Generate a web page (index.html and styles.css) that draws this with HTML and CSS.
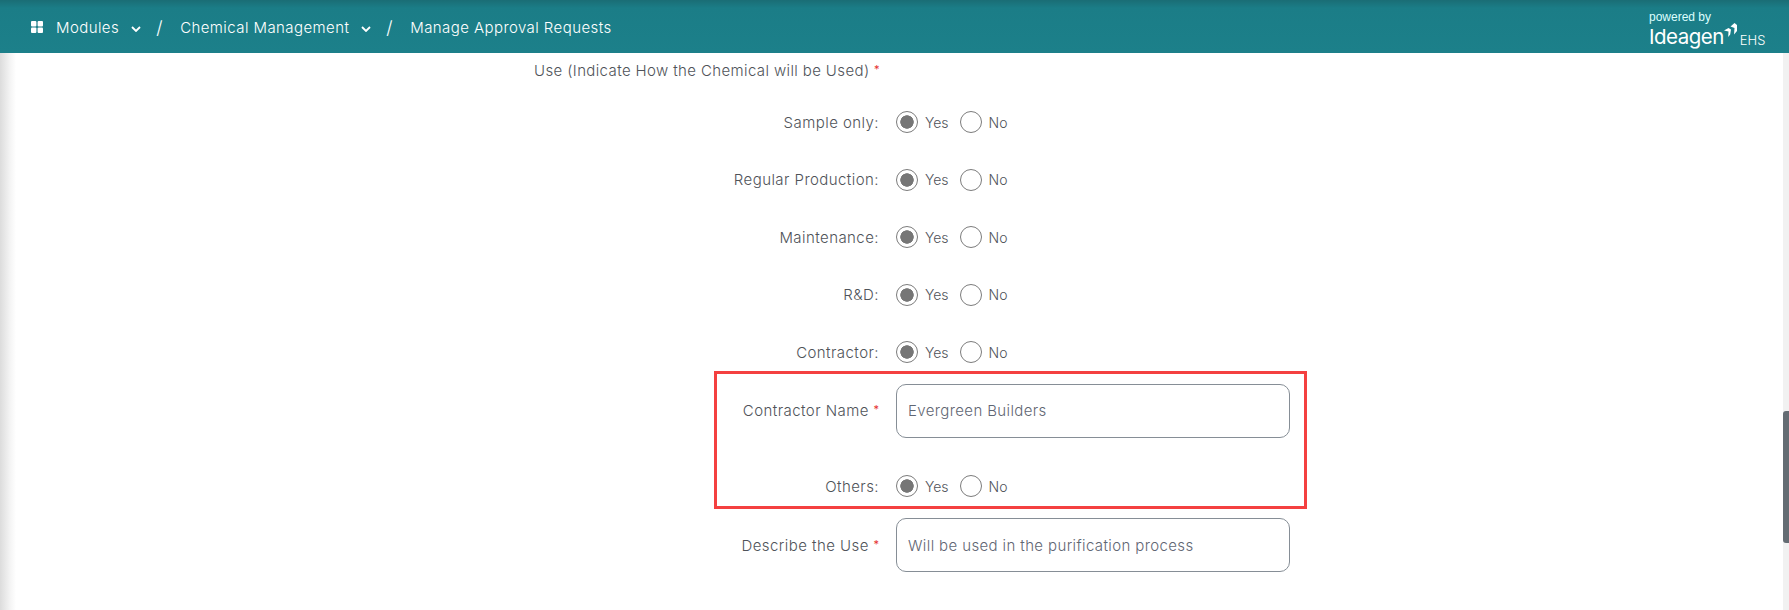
FILE: index.html
```html
<!DOCTYPE html>
<html lang="en">
<head>
<meta charset="utf-8">
<title>Manage Approval Requests</title>
<link rel="stylesheet" href="styles.css">
</head>
<body>
<header class="topbar">
  <nav class="crumbs">
    <svg class="grid-icon" viewBox="0 0 12 12" aria-hidden="true"><rect x="0" y="0" width="5.4" height="5.4" rx="1"/><rect x="6.6" y="0" width="5.4" height="5.4" rx="1"/><rect x="0" y="6.6" width="5.4" height="5.4" rx="1"/><rect x="6.6" y="6.6" width="5.4" height="5.4" rx="1"/></svg>
    <span class="crumb">Modules</span>
    <svg class="chev" viewBox="0 0 10 6" aria-hidden="true"><path d="M1 1l4 4 4-4"/></svg>
    <span class="slash">/</span>
    <span class="crumb">Chemical Management</span>
    <svg class="chev" viewBox="0 0 10 6" aria-hidden="true"><path d="M1 1l4 4 4-4"/></svg>
    <span class="slash">/</span>
    <span class="crumb">Manage Approval Requests</span>
  </nav>
  <div class="brand">
    <div class="powered">powered by</div>
    <div class="brand-line">
      <span class="ideagen">Ideagen</span>
      <svg class="mark" viewBox="0 0 13 15" aria-hidden="true"><path d="M0 7.500l4.500-2.500 2.500 1.500-.8 5-2 2.500.3-5.500z"/><path d="M6.500 3.500l4-3.500 2.500 2v6l-3 3.500.5-6.500z"/></svg>
      <span class="ehs">EHS</span>
    </div>
  </div>
</header>
<div class="page">
  <main class="content">
    <div class="row heading"><div class="label">Use (Indicate How the Chemical will be Used) <b class="req">*</b></div></div>
    <div class="row first">
      <div class="label">Sample only:</div>
      <div class="radios"><input type="radio" name="r1" checked><span>Yes</span><input type="radio" name="r1"><span>No</span></div>
    </div>
    <div class="row">
      <div class="label">Regular Production:</div>
      <div class="radios"><input type="radio" name="r2" checked><span>Yes</span><input type="radio" name="r2"><span>No</span></div>
    </div>
    <div class="row">
      <div class="label">Maintenance:</div>
      <div class="radios"><input type="radio" name="r3" checked><span>Yes</span><input type="radio" name="r3"><span>No</span></div>
    </div>
    <div class="row">
      <div class="label">R&amp;D:</div>
      <div class="radios"><input type="radio" name="r4" checked><span>Yes</span><input type="radio" name="r4"><span>No</span></div>
    </div>
    <div class="row">
      <div class="label">Contractor:</div>
      <div class="radios"><input type="radio" name="r5" checked><span>Yes</span><input type="radio" name="r5"><span>No</span></div>
    </div>
    <section class="highlight">
      <div class="row tall">
        <div class="label">Contractor Name <b class="req">*</b></div>
        <input class="field" type="text" value="Evergreen Builders">
      </div>
      <div class="row after-field">
        <div class="label">Others:</div>
        <div class="radios"><input type="radio" name="r6" checked><span>Yes</span><input type="radio" name="r6"><span>No</span></div>
      </div>
    </section>
    <div class="row tall describe">
      <div class="label">Describe the Use <b class="req">*</b></div>
      <input class="field" type="text" value="Will be used in the purification process">
    </div>
  </main>
  <aside class="scrollbar"><div class="thumb"></div></aside>
</div>
</body>
</html>
```
FILE: styles.css
```css
* { box-sizing: border-box; }
html, body { height: 100%; }
body {
  margin: 0;
  overflow: hidden;
  background: #fff;
  font-family: "Inter", "Noto Sans", sans-serif;
  color: #4f5359;
  display: flex;
  flex-direction: column;
}
.topbar {
  height: 53px;
  flex: none;
  display: flex;
  align-items: center;
  justify-content: space-between;
  padding: 0 26px 0 31px;
  background: linear-gradient(#1a6d75 0, #1b7d87 8px, #1c808a 100%);
  color: #fff;
}
.crumbs { display: flex; align-items: center; padding-top: 2px; font-size: 15px; font-weight: 300; letter-spacing: .42px; }
.grid-icon { width: 12px; height: 12px; fill: #fff; margin: -2px 13px 0 0; }
.chev { width: 10px; height: 6px; fill: none; stroke: #fff; stroke-width: 1.8; margin: 2px 15px 0 12px; }
.slash { width: 24px; font-size: 18px; letter-spacing: 0; }
.brand { width: 114px; flex: none; padding-top: 6px; }
.powered { font-family: "Liberation Sans", sans-serif; font-size: 12px; line-height: 12px; color: #dff; }
.brand-line { display: flex; align-items: flex-end; height: 24px; margin-top: 2px; }
.ideagen { font-size: 20.500px; font-weight: 400; line-height: 24px; letter-spacing: -.5px; }
.mark { width: 13px; height: 15px; flex: none; fill: #fff; margin: 0 0 11px 0; }
.ehs { font-weight: 300; font-size: 13px; line-height: 18px; margin-left: 3px; }

.page { flex: 1; display: flex; min-height: 0; }
.content {
  --label: 345px;
  flex: 1;
  padding: 2px 0 0 534px;
  background: linear-gradient(90deg, #dcdcdc 0, #f4f4f4 10px, #fff 16px);
}
.row {
  display: grid;
  grid-template-columns: var(--label) 1fr;
  column-gap: 17px;
  align-items: center;
  height: 30px;
  margin-top: 27.500px;
  font-size: 15px;
  font-weight: 300;
  letter-spacing: .44px;
}
.heading { margin-top: 0; letter-spacing: .38px; }
.first { margin-top: 22px; }
.label { text-align: right; white-space: nowrap; }
.req { color: #e53030; font-weight: 400; font-size: 11px; vertical-align: 3px; letter-spacing: 0; }
.radios { display: flex; align-items: center; font-size: 14px; letter-spacing: 0; }
.radios span { margin: 0 11px 0 7px; }
input[type="radio"] {
  appearance: none;
  width: 22px;
  height: 22px;
  margin: 0;
  border: 1.500px solid #7c7c7c;
  border-radius: 50%;
  background: #fff;
}
input[type="radio"]:checked { background: radial-gradient(circle, #767676 0 6.400px, #fff 7px); }
.highlight {
  --label: 162px;
  width: 587px;
  height: 132px;
  margin: 7px 0 0 183px;
  outline: 3px solid #f44040;
  overflow: hidden;
}
.tall { height: 54px; }
.highlight .tall { margin-top: 9.500px; }
.after-field { margin-top: 33.500px; }
.describe { margin-top: 12px; }
.field {
  width: 394px;
  height: 54px;
  padding: 0 11px;
  border: 1px solid #868e96;
  border-radius: 10px;
  background: #fff;
  font: inherit;
  letter-spacing: .38px;
  color: #5f6673;
}
.scrollbar { width: 6px; flex: none; background: #f1f1f1; padding-top: 358px; }
.thumb { height: 132px; background: #646c73; border-radius: 3px 0 0 3px; }
```
